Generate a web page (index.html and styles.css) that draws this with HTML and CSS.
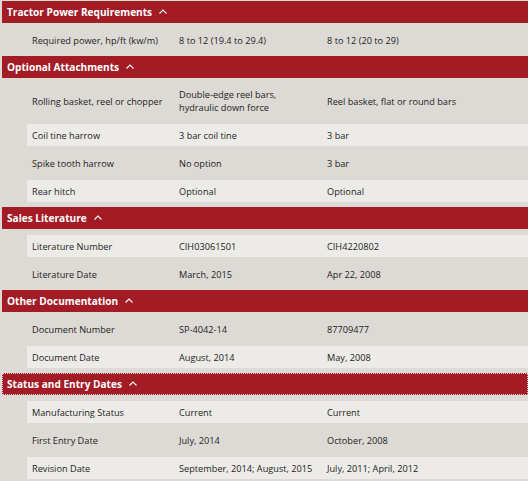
FILE: index.html
```html
<!DOCTYPE html>
<html>
<head>
<meta charset="utf-8">
<link rel="stylesheet" href="styles.css">
</head>
<body>
<div class="specs">
  <section class="section">
    <div class="sec-head"><span>Tractor Power Requirements</span><svg class="caret" width="8" height="5" viewBox="0 0 8 5"><polyline points="0.5,4.5 4,1 7.5,4.5" fill="none" stroke="#fff" stroke-width="1.1"/></svg></div>
    <div class="sec-body">
      <div class="row"><div class="band"><div class="cell">Required power, hp/ft (kw/m)</div><div class="cell">8 to 12 (19.4 to 29.4)</div><div class="cell">8 to 12 (20 to 29)</div></div></div>
    </div>
  </section>
  <section class="section">
    <div class="sec-head"><span>Optional Attachments</span><svg class="caret" width="8" height="5" viewBox="0 0 8 5"><polyline points="0.5,4.5 4,1 7.5,4.5" fill="none" stroke="#fff" stroke-width="1.1"/></svg></div>
    <div class="sec-body">
      <div class="row"><div class="band"><div class="cell">Rolling basket, reel or chopper</div><div class="cell">Double-edge reel bars,<br>hydraulic down force</div><div class="cell">Reel basket, flat or round bars</div></div></div>
      <div class="row alt"><div class="band"><div class="cell">Coil tine harrow</div><div class="cell">3 bar coil tine</div><div class="cell">3 bar</div></div></div>
      <div class="row"><div class="band"><div class="cell">Spike tooth harrow</div><div class="cell">No option</div><div class="cell">3 bar</div></div></div>
      <div class="row alt"><div class="band"><div class="cell">Rear hitch</div><div class="cell">Optional</div><div class="cell">Optional</div></div></div>
    </div>
  </section>
  <section class="section">
    <div class="sec-head"><span>Sales Literature</span><svg class="caret" width="8" height="5" viewBox="0 0 8 5"><polyline points="0.5,4.5 4,1 7.5,4.5" fill="none" stroke="#fff" stroke-width="1.1"/></svg></div>
    <div class="sec-body">
      <div class="row alt"><div class="band"><div class="cell">Literature Number</div><div class="cell">CIH03061501</div><div class="cell">CIH4220802</div></div></div>
      <div class="row"><div class="band"><div class="cell">Literature Date</div><div class="cell">March, 2015</div><div class="cell">Apr 22, 2008</div></div></div>
    </div>
  </section>
  <section class="section">
    <div class="sec-head"><span>Other Documentation</span><svg class="caret" width="8" height="5" viewBox="0 0 8 5"><polyline points="0.5,4.5 4,1 7.5,4.5" fill="none" stroke="#fff" stroke-width="1.1"/></svg></div>
    <div class="sec-body">
      <div class="row"><div class="band"><div class="cell">Document Number</div><div class="cell">SP-4042-14</div><div class="cell">87709477</div></div></div>
      <div class="row alt"><div class="band"><div class="cell">Document Date</div><div class="cell">August, 2014</div><div class="cell">May, 2008</div></div></div>
    </div>
  </section>
  <section class="section">
    <div class="sec-head focused"><span>Status and Entry Dates</span><svg class="caret" width="8" height="5" viewBox="0 0 8 5"><polyline points="0.5,4.5 4,1 7.5,4.5" fill="none" stroke="#fff" stroke-width="1.1"/></svg></div>
    <div class="sec-body">
      <div class="row alt"><div class="band"><div class="cell">Manufacturing Status</div><div class="cell">Current</div><div class="cell">Current</div></div></div>
      <div class="row"><div class="band"><div class="cell">First Entry Date</div><div class="cell">July, 2014</div><div class="cell">October, 2008</div></div></div>
      <div class="row alt"><div class="band"><div class="cell">Revision Date</div><div class="cell">September, 2014; August, 2015</div><div class="cell">July, 2011; April, 2012</div></div></div>
    </div>
  </section>
</div>
</body>
</html>
```

FILE: styles.css
```css
html, body {
  margin: 0;
  padding: 0;
  background: #ddd9d5;
}
body {
  font-family: "Open Sans", "Noto Sans", sans-serif;
  font-size: 9.2px;
  color: #1e1e1e;
  overflow: hidden;
}
.specs {
  padding: 1px 0 0 2px;
}
.sec-head {
  height: 22px;
  background: #a31b25;
  color: #fff;
  font-weight: 700;
  font-size: 10.1px;
  display: flex;
  align-items: center;
  padding-left: 5px;
  gap: 7px;
}
.sec-head.focused {
  outline: 1px dotted rgba(255, 255, 255, 0.75);
  outline-offset: -1px;
}
.caret {
  display: block;
  margin-top: -1px;
}
.sec-body {
  padding: 3px 0 2px 25px;
}
.row {
  padding: 3px 0;
}
.band {
  display: grid;
  grid-template-columns: 147px 148px 1fr;
  min-height: 22px;
  align-items: center;
}
.row.alt .band {
  background: #ecebe7;
}
.cell {
  padding: 4px 2px 4px 5px;
  line-height: 13px;
  white-space: nowrap;
}
```
